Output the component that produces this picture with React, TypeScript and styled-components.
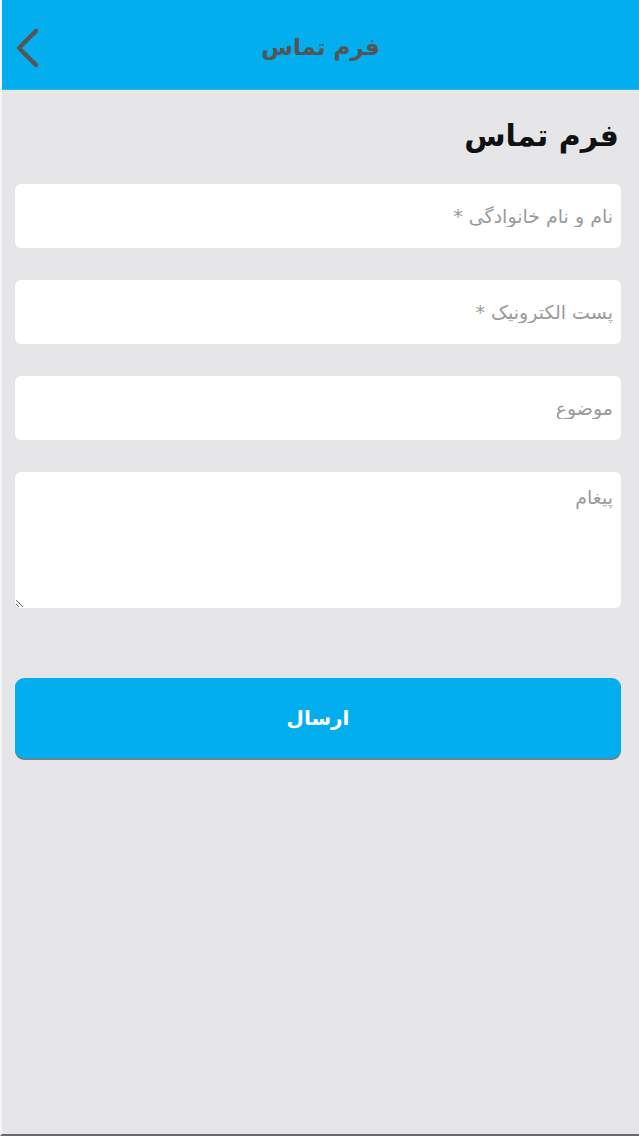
import React from "react";
import styled, { createGlobalStyle } from "styled-components";

const GlobalStyle = createGlobalStyle`
	html, body {
		margin: 0;
		padding: 0;
		background: #e6e6e9;
	}
	* {
		box-sizing: border-box;
	}
`;

const Screen = styled.div`
	width: 639px;
	height: 1136px;
	display: flex;
	flex-direction: column;
	background: #e6e6e9;
	border-left: 2px solid #f4f4f6;
	border-bottom: 2px solid #6a6a6a;
	font-family: "DejaVu Sans", "Noto Sans", sans-serif;
	direction: rtl;
	overflow: hidden;
`;

const Header = styled.header`
	height: 90px;
	flex-shrink: 0;
	background: #03aeef;
	border-bottom: 1px solid #2bb7ec;
	display: flex;
	align-items: center;
	justify-content: center;
	position: relative;
	direction: ltr;
`;

const BackButton = styled.button`
	position: absolute;
	left: 8px;
	top: 26px;
	width: 36px;
	height: 44px;
	padding: 0;
	border: none;
	background: none;
	cursor: pointer;
`;

const HeaderTitle = styled.h1`
	margin: 0 0 -4px 0;
	font-size: 23px;
	font-weight: bold;
	color: #545454;
	direction: rtl;
`;

const Content = styled.main`
	display: flex;
	flex-direction: column;
	padding: 20px 18px 0 13px;
`;

const PageTitle = styled.h2`
	margin: 8px 2px 30px 0;
	font-size: 30px;
	font-weight: bold;
	color: #111;
	line-height: 36px;
`;

const Form = styled.form`
	display: flex;
	flex-direction: column;
	gap: 32px;
`;

const fieldBase = `
	width: 100%;
	border: none;
	border-radius: 6px;
	background: #fff;
	font-family: "DejaVu Sans", "Noto Sans", sans-serif;
	font-size: 19px;
	color: #333;
	direction: rtl;
	outline: none;
	&::placeholder {
		color: #9a9a9a;
	}
`;

const Input = styled.input`
	${fieldBase}
	height: 64px;
	padding: 0 8px;
`;

const TextArea = styled.textarea`
	${fieldBase}
	height: 136px;
	padding: 14px 8px;
	resize: vertical;
`;

const SubmitButton = styled.button`
	margin-top: 70px;
	height: 80px;
	width: 100%;
	border: none;
	border-radius: 9px;
	background: #03aeef;
	box-shadow: 0 2px 0 #5f8796;
	color: #fff;
	font-family: "DejaVu Sans", "Noto Sans", sans-serif;
	font-size: 20px;
	font-weight: bold;
	cursor: pointer;
`;

const ChevronLeft = () => (
	<svg width="36" height="44" viewBox="0 0 36 44">
		<path d="M26 5 L9 22 L26 39" fill="none" stroke="#555" strokeWidth="4.5" strokeLinecap="round" strokeLinejoin="round" />
	</svg>
);

export default function App() {
	return (
		<>
			<GlobalStyle />
			<Screen>
				<Header>
					<BackButton aria-label="back">
						<ChevronLeft />
					</BackButton>
					<HeaderTitle>فرم تماس</HeaderTitle>
				</Header>
				<Content>
					<PageTitle>فرم تماس</PageTitle>
					<Form onSubmit={(e) => e.preventDefault()}>
						<Input placeholder="نام و نام خانوادگی *" />
						<Input placeholder="پست الکترونیک *" />
						<Input placeholder="موضوع" />
						<TextArea placeholder="پیغام" />
					</Form>
					<SubmitButton type="button">ارسال</SubmitButton>
				</Content>
			</Screen>
		</>
	);
}
